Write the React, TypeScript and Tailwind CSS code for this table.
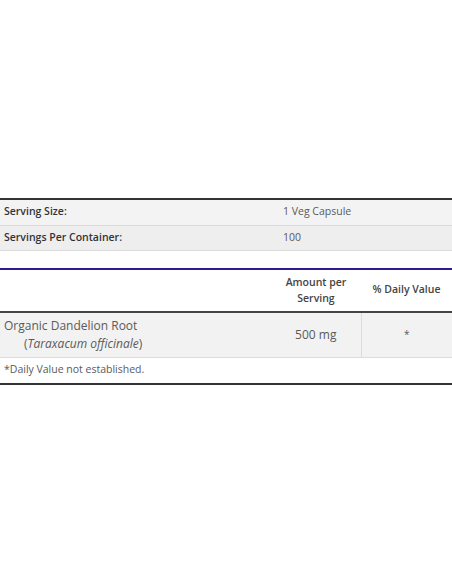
export default function App() {
  return (
    <div className="min-h-[584px] w-[452px] bg-white pt-[198px] text-[#5a5a5a] [font-family:'Open_Sans','Noto_Sans',sans-serif]">
      <table className="w-full border-collapse border-t-2 border-[#333] text-[10.5px]">
        <tbody>
          <tr className="h-[26px] border-b border-[#dcdcdc] bg-[#f3f3f3]">
            <td className="w-[279px] pl-1 font-semibold text-[#333]">Serving Size:</td>
            <td className="pl-1">1 Veg Capsule</td>
          </tr>
          <tr className="h-[25px] border-b border-[#dcdcdc] bg-[#eeeeee]">
            <td className="pl-1 font-semibold text-[#333]">Servings Per Container:</td>
            <td className="pl-1">100</td>
          </tr>
        </tbody>
      </table>

      <table className="mt-[17px] w-full border-collapse border-t-2 border-[#2f1a8f]">
        <thead>
          <tr className="h-[43px] border-b-2 border-[#444] text-[10.5px] text-[#444]">
            <th className="w-[271px]"></th>
            <th className="w-[90px] text-center leading-[16px] font-semibold">
              Amount per
              <br />
              Serving
            </th>
            <th className="text-center font-semibold">% Daily Value</th>
          </tr>
        </thead>
        <tbody>
          <tr className="h-[46px] border-b border-[#dcdcdc] bg-[#f2f2f2] text-[12px]">
            <td className="pl-1 leading-[18px]">
              Organic Dandelion Root
              <br />
              <span className="pl-5">
                (<i>Taraxacum officinale</i>)
              </span>
            </td>
            <td className="text-center">500 mg</td>
            <td className="border-l border-[#dcdcdc] text-center text-[10px]">*</td>
          </tr>
          <tr className="h-[26px] border-b-2 border-[#333] text-[10.5px]">
            <td colSpan={3} className="pl-1">
              *Daily Value not established.
            </td>
          </tr>
        </tbody>
      </table>
    </div>
  )
}
